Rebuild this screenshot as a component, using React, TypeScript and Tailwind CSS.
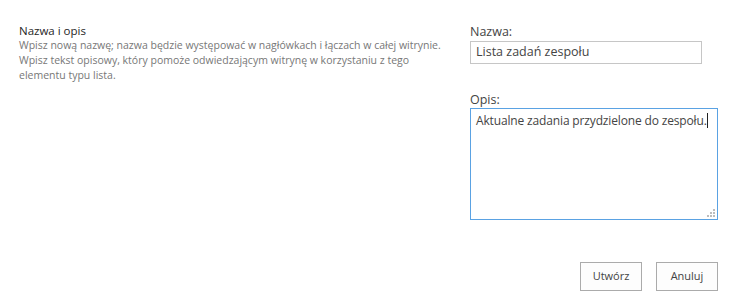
import React from 'react';

const font = { fontFamily: '"Open Sans", "Noto Sans", sans-serif' };

export default function App() {
  return (
    <div className="w-[730px] h-[304px] bg-white flex flex-col text-[#444]" style={font}>
      <div className="flex">
        {/* Opis sekcji */}
        <div className="w-[470px] pl-[19px] pt-[23px] pr-4">
          <h3 className="text-[11.5px] leading-[16px] text-[#262626]">Nazwa i opis</h3>
          <p className="text-[10.5px] leading-[15px] text-[#777] mt-[-1px]">
            Wpisz nową nazwę; nazwa będzie występować w nagłówkach i łączach w całej witrynie. Wpisz tekst opisowy, który pomoże odwiedzającym witrynę w korzystaniu z tego elementu typu lista.
          </p>
        </div>

        {/* Pola */}
        <div className="w-[248px] pt-[23px] flex flex-col">
          <label className="text-[12.5px] leading-[17px] text-[#444]">Nazwa:</label>
          <div className="mt-[1px] w-[232px] h-[23px] border border-[#c6c6c6] flex items-center px-[5px] text-[12.5px] text-[#444]">
            Lista zadań zespołu
          </div>

          <label className="mt-[27px] text-[12.5px] leading-[17px] text-[#444]">Opis:</label>
          <div className="relative w-[248px] h-[112px] border border-[#5aa2e3] px-[5px] pt-[3px] text-[12px] leading-[17px] text-[#444] whitespace-nowrap tracking-[-0.15px]">
            <span>Aktualne zadania przydzielone do zespołu.</span>
            <span className="inline-block w-px h-[15px] bg-[#222] align-middle -mt-[2px]"></span>
            <svg className="absolute right-[2px] bottom-[2px]" width="8" height="8" viewBox="0 0 8 8">
              <rect x="6" y="0" width="2" height="2" fill="#bdbdbd" />
              <rect x="3" y="3" width="2" height="2" fill="#bdbdbd" />
              <rect x="6" y="3" width="2" height="2" fill="#bdbdbd" />
              <rect x="0" y="6" width="2" height="2" fill="#bdbdbd" />
              <rect x="3" y="6" width="2" height="2" fill="#bdbdbd" />
              <rect x="6" y="6" width="2" height="2" fill="#bdbdbd" />
            </svg>
          </div>
        </div>
      </div>

      {/* Przyciski */}
      <div className="flex justify-end gap-[14px] pr-[12px] mt-[42px]">
        <button className="w-[62px] h-[29px] border border-[#ababab] bg-[#fdfdfd] text-[11px] text-[#444]">Utwórz</button>
        <button className="w-[62px] h-[29px] border border-[#ababab] bg-[#fdfdfd] text-[11px] text-[#444]">Anuluj</button>
      </div>
    </div>
  );
}
